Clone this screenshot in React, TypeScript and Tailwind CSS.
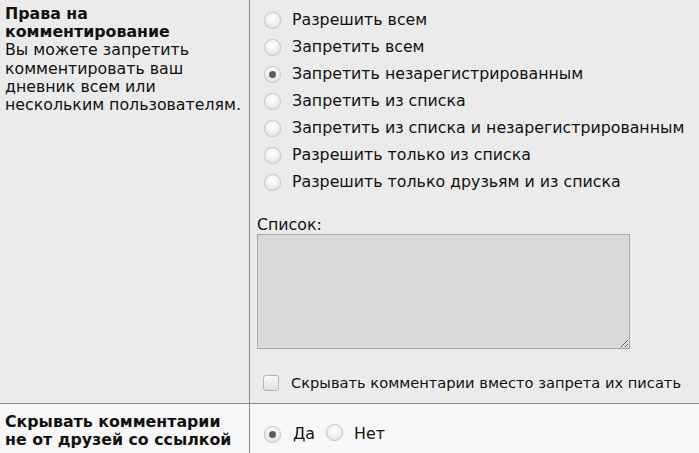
import React from "react";

const Radio = ({ checked }: { checked?: boolean }) => (
  <span className="relative inline-flex h-[17px] w-[17px] shrink-0 items-center justify-center rounded-full border border-[#c8c8c8] bg-[radial-gradient(circle_at_50%_35%,#ffffff_0%,#f2f2f2_45%,#dadada_100%)] shadow-[0_0_1px_rgba(0,0,0,0.15)]">
    {checked && <span className="h-[7px] w-[7px] rounded-full bg-[#5c5c5c]" />}
  </span>
);

const options = [
  "Разрешить всем",
  "Запретить всем",
  "Запретить незарегистрированным",
  "Запретить из списка",
  "Запретить из списка и незарегистрированным",
  "Разрешить только из списка",
  "Разрешить только друзьям и из списка",
];

export default function App() {
  return (
    <div
      className="h-[453px] w-[699px] overflow-hidden text-[15.8px] leading-[18.2px] text-[#111]"
      style={{ fontFamily: '"DejaVu Sans", Verdana, sans-serif' }}
    >
      <div className="flex h-[403px] bg-[#ebebeb]">
        <div className="w-[250px] shrink-0 border-r border-[#8a8a8a] pl-[5px] pr-[3px] pt-[5px]">
          <div className="font-bold">Права на комментирование</div>
          <div>Вы можете запретить комментировать ваш дневник всем или нескольким пользователям.</div>
        </div>
        <div className="flex min-w-0 flex-1 flex-col overflow-hidden pt-[7px]">
          {options.map((o, i) => (
            <div key={o} className="flex h-[27px] shrink-0 items-center whitespace-nowrap pl-[14px]">
              <Radio checked={i === 2} />
              <span className="ml-[11px]">{o}</span>
            </div>
          ))}
          <div className="mt-[20px] shrink-0 pl-[7px]">Список:</div>
          <textarea className="ml-[7px] h-[115px] w-[373px] shrink-0 border border-[#a9a9a9] bg-[#d9d9d9] outline-none" />
          <div className="mt-[25px] flex shrink-0 items-center whitespace-nowrap pl-[13px]">
            <span className="h-[16px] w-[16px] shrink-0 rounded-[3px] border border-[#b4b4b4] bg-[linear-gradient(#fafafa,#e0e0e0)]" />
            <span className="ml-[12px] text-[14.65px]">Скрывать комментарии вместо запрета их писать</span>
          </div>
        </div>
      </div>
      <div className="flex h-[50px] border-t border-[#8a8a8a] bg-[#f7f7f7]">
        <div className="w-[250px] shrink-0 border-r border-[#8a8a8a] pl-[5px] pr-[3px] pt-[9px] font-bold">
          Скрывать комментарии не от друзей со ссылкой
        </div>
        <div className="flex flex-1 items-center pl-[14px] pt-[12px]">
          <Radio checked />
          <span className="ml-[12px]">Да</span>
          <span className="ml-[11px]"><Radio /></span>
          <span className="ml-[11px]">Нет</span>
        </div>
      </div>
    </div>
  );
}
